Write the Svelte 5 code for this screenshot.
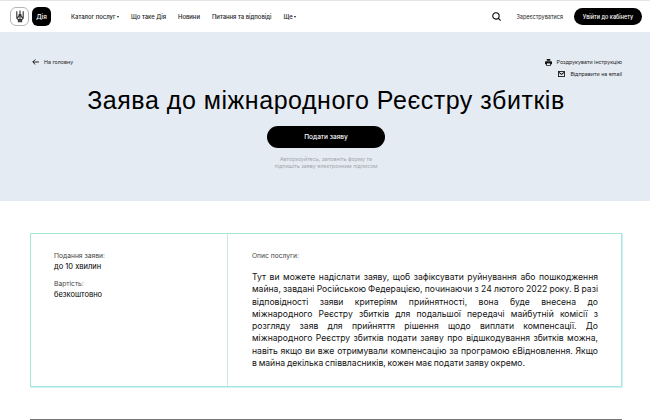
<script>
  const nav = [
    { t: 'Каталог послуг', c: true },
    { t: 'Що таке Дія' },
    { t: 'Новини' },
    { t: 'Питання та відповіді' },
    { t: 'Ще', c: true }
  ];
  const lines = [
    'Тут ви можете надіслати заяву, щоб зафіксувати руйнування або пошкодження',
    'майна, завдані Російською Федерацією, починаючи з 24 лютого 2022 року. В разі',
    'відповідності заяви критеріям прийнятності, вона буде внесена до',
    'міжнародного Реєстру збитків для подальшої передачі майбутній комісії з',
    'розгляду заяв для прийняття рішення щодо виплати компенсації. До',
    'міжнародного Реєстру збитків подати заяву про відшкодування збитків можна,',
    'навіть якщо ви вже отримували компенсацію за програмою єВідновлення. Якщо',
    'в майна декілька співвласників, кожен має подати заяву окремо.'
  ];
</script>

<div class="page">
  <header class="top">
    <div class="logos">
      <div class="trident">
        <svg width="8" height="13" viewBox="0 0 10 16" fill="none" stroke="#333" stroke-width="1.400">
          <path d="M5 .5v14M1 1.500v8c0 2 1.500 2.500 4 3 2.500-.5 4-1 4-3v-8M1 9.500c2.500 0 3-2 3-4.500M9 9.500c-2.500 0-3-2-3-4.500M3 12.500v2h4v-2"/>
        </svg>
      </div>
      <div class="dia">Дія</div>
    </div>
    <nav class="nav">
      {#each nav as n}
        <span class="item">{n.t}{#if n.c}<i class="caret"></i>{/if}</span>
      {/each}
    </nav>
    <div class="right">
      <svg class="search" width="9" height="9" viewBox="0 0 11 11" fill="none" stroke="#000" stroke-width="1.300">
        <circle cx="4.800" cy="4.800" r="3.900"/><path d="M7.500 7.500l3 3"/>
      </svg>
      <span class="reg">Зареєструватися</span>
      <span class="login">Увійти до кабінету</span>
    </div>
  </header>

  <section class="hero">
    <div class="tools">
      <span class="back">
        <svg width="7" height="6" viewBox="0 0 8 7" fill="none" stroke="#000" stroke-width="1"><path d="M8 3.500H1M3.800.5l-3 3 3 3"/></svg>
        На головну
      </span>
      <div class="acts">
        <span class="act">
          <svg width="7" height="7" viewBox="0 0 8 8" fill="#111"><path d="M2 0h4v2H2zM.8 2.500h6.400a.8.8 0 0 1 .8.8V6H6.500v2h-5V6H0V3.300a.8.8 0 0 1 .8-.8z"/><path d="M2.300 5h3.400v2.200H2.300z" fill="#e5ebf3"/></svg>
          Роздрукувати інструкцію
        </span>
        <span class="act">
          <svg width="7" height="6" viewBox="0 0 8 7" fill="none" stroke="#111"><rect x=".5" y=".5" width="7" height="6"/><path d="M1 1.500l3 2.500 3-2.500" stroke-width="1.200"/></svg>
          Відправити на email
        </span>
      </div>
    </div>
    <h1>Заява до міжнародного Реєстру збитків</h1>
    <button class="cta">Подати заяву</button>
    <p class="hint">Авторизуйтесь, заповніть форму та<br />підпишіть заяву електронним підписом</p>
  </section>

  <main class="body">
    <div class="card">
      <aside class="side">
        <div class="lab">Подання заяви:</div>
        <div class="val">до 10 хвилин</div>
        <div class="lab second">Вартість:</div>
        <div class="val">безкоштовно</div>
      </aside>
      <div class="desc">
        <div class="lab">Опис послуги:</div>
        <p>{#each lines as l}<span class="ln">{l}</span>{/each}</p>
      </div>
    </div>
    <div class="rule"></div>
  </main>
</div>

<style>
  :global(body) { margin: 0; background: #fff; }
  .page { width: 650px; height: 420px; overflow: hidden; font-family: "Inter", "Liberation Sans", sans-serif; color: #000; }
  .top { height: 31px; border-top: 1px solid #e4e4e4; display: flex; align-items: center; padding: 0 8px 0 10px; background: #fff; }
  .logos { display: flex; gap: 3px; }
  .trident { width: 19px; height: 19px; box-sizing: border-box; border: 1px solid #b5b5b5; border-radius: 6px; display: flex; align-items: center; justify-content: center; }
  .dia { width: 19px; height: 19px; border-radius: 6px; background: #000; color: #fff; font-size: 6.500px; font-weight: 500; display: flex; align-items: center; justify-content: center; }
  .nav { display: flex; gap: 12px; margin-left: 20px; font-size: 5.900px; font-weight: 500; color: #222; }
  .item { display: flex; align-items: center; }
  .caret { width: 0; height: 0; border: 1.500px solid transparent; border-top: 2px solid #222; border-bottom: 0; margin-left: 1.500px; }
  .right { margin-left: auto; display: flex; align-items: center; }
  .search { margin-right: 15px; }
  .reg { font-size: 5.500px; font-weight: 400; color: #222; margin-right: 11px; }
  .login { background: #000; color: #fff; border-radius: 9px; height: 17px; width: 68px; display: flex; align-items: center; justify-content: center; font-size: 5.500px; font-weight: 500; }
  .hero { height: 169px; background: #e5ebf3; box-sizing: border-box; padding: 25px 28px 0 30px; display: flex; flex-direction: column; align-items: center; }
  .tools { width: 100%; box-sizing: border-box; padding-left: 2px; display: flex; justify-content: space-between; align-items: flex-start; font-size: 5.300px; color: #222; }
  .back { display: flex; align-items: center; gap: 5px; height: 10px; }
  .acts { display: flex; flex-direction: column; align-items: flex-end; gap: 2px; }
  .act { display: flex; align-items: center; gap: 5px; height: 10px; }
  h1 { font-family: "Liberation Sans", sans-serif; font-weight: 400; font-size: 25px; line-height: 30px; margin: 6px 0 0; letter-spacing: .53px; }
  .cta { margin-top: 11px; width: 118px; height: 22px; border-radius: 11px; border: 0; background: #000; color: #fff; font: 500 6.500px "Inter", sans-serif; padding: 0; }
  .hint { margin: 8px 0 0; text-align: center; font-size: 5.300px; line-height: 7px; color: #a0a5ab; }
  .body { padding: 32px 28px 0 30px; }
  .card { display: flex; height: 152px; border: 1px solid #a6e8d2; border-right-color: #a6e4e4; border-bottom-color: #a6e4e4; box-shadow: 0.500px 0.500px 0 #a6e4e4; }
  .side { width: 197px; border-right: 1px solid #c6eee0; box-sizing: border-box; padding: 18px 23px; flex: none; }
  .lab { font-size: 6.700px; line-height: 8px; color: #444; }
  .val { font-size: 7.500px; line-height: 10px; margin-top: 2px; font-weight: 400; }
  .second { margin-top: 8px; }
  .desc { flex: 1; padding: 18px 23px 0 24px; }
  .desc p { margin: 11px 0 0; font-size: 8.600px; line-height: 12.250px; color: #111; word-spacing: -.6px; }
  .ln { display: block; text-align: justify; text-align-last: justify; white-space: nowrap; }
  .ln:last-child { text-align-last: left; }
  .rule { height: 1px; background: #777; margin-top: 32px; }
</style>
